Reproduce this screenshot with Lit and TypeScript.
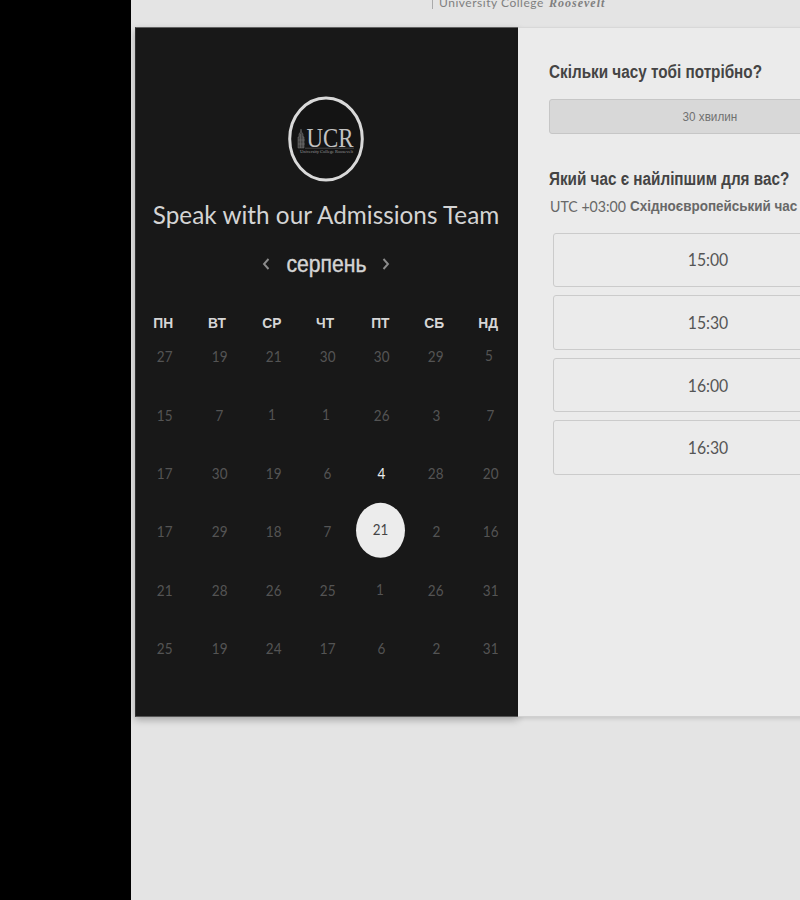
import { LitElement, html, css } from "lit";
import { customElement } from "lit/decorators.js";
import { classMap } from "lit/directives/class-map.js";

const WEEKDAYS = ["ПН", "ВТ", "СР", "ЧТ", "ПТ", "СБ", "НД"];
const WEEKS = [
  [27, 19, 21, 30, 30, 29, 5],
  [15, 7, 1, 1, 26, 3, 7],
  [17, 30, 19, 6, 4, 28, 20],
  [17, 29, 18, 7, 21, 2, 16],
  [21, 28, 26, 25, 1, 26, 31],
  [25, 19, 24, 17, 6, 2, 31],
];
const TIMES = ["15:00", "15:30", "16:00", "16:30"];

@customElement("booking-calendar")
class BookingCalendar extends LitElement {
  static styles = css`
    :host { display: flex; flex-direction: column; align-items: center; box-sizing: border-box; width: 383px; height: 690px; padding-top: 68px; background: #181818; color: #d4d4d4; border-top: 1px solid #626262; border-left: 1px solid #303030; border-bottom: 1px solid #555; box-shadow: 0 3px 7px rgba(0,0,0,.28); font-family: Lato, "Liberation Sans", sans-serif; }
    .logo { display: block; width: 76px; height: 86px; flex: none; margin-right: 2px; }
    .title { margin: 16px 0 0; height: 32px; line-height: 32px; font-size: 25px; font-weight: 400; white-space: nowrap; }
    .title span { display: inline-block; transform: translateX(-1px) scaleX(.973); }
    .month { display: flex; align-items: center; justify-content: center; gap: 14px; height: 30px; margin-top: 19px; margin-right: 2px; }
    .arrow { width: 8px; height: 12px; fill: none; stroke: #8c8c8c; stroke-width: 1.9; }
    .name { width: 84px; text-align: center; font: 23px/30px "Liberation Sans", sans-serif; -webkit-text-stroke: .4px #d4d4d4; }
    .name span { display: inline-block; transform: translateX(-1px) scaleX(.92); }
    .heads, .days { display: grid; grid-template-columns: repeat(7, 54.2px); width: 380px; align-self: flex-start; }
    .heads { margin-top: 34px; height: 20px; }
    .head { text-align: center; font: bold 15.5px/20px "Liberation Sans", sans-serif; color: #d6d6d6; }
    .head span { display: inline-block; transform: scaleX(.89); }
    .days { margin-left: 2px; margin-top: -6px; grid-auto-rows: 58.35px; }
    .day { display: flex; align-items: center; justify-content: center; font-size: 15px; color: #545454; }
    .day span { transform: scaleX(.9); }
    .raised span { transform: translate(-1.5px, -1px) scaleX(.9); }
    .open { color: #ececec; }
    .picked { color: #444; }
    .picked span { width: 55px; height: 55px; flex: none; box-sizing: border-box; padding-bottom: 2px; border-radius: 50%; background: #ececec; display: flex; align-items: center; justify-content: center; transform: translate(-1px, -1.2px) scaleX(.89); }
  `;
  render() {
    return html`
      <svg class="logo" viewBox="0 0 76 86">
        <ellipse cx="38" cy="43" rx="36.3" ry="41" fill="#141414" stroke="#d9d9d9" stroke-width="3" />
        <path d="M10 52V41h1v-3l1.500-2 .5-3 .5 3 1.500 2v3h1v11zM10 44h7M10 48h7M12.500 38v14M15 40v12" fill="#444" stroke="#777" stroke-width=".5" />
        <text x="18.500" y="50.500" font-family="Liberation Serif, serif" font-size="27.500" fill="#c2c2c2" textLength="47" lengthAdjust="spacingAndGlyphs">UCR</text>
        <path d="M17 52.200h49" stroke="#777" stroke-width=".5" />
        <text x="12" y="56.500" font-family="Liberation Serif, serif" font-size="5" fill="#999" textLength="53" lengthAdjust="spacingAndGlyphs">University College Roosevelt</text>
      </svg>
      <h1 class="title"><span>Speak with our Admissions Team</span></h1>
      <div class="month">
        <svg class="arrow" viewBox="0 0 8 12"><path d="M6.500 1L2 6l4.500 5" /></svg>
        <div class="name"><span>серпень</span></div>
        <svg class="arrow" viewBox="0 0 8 12"><path d="M1.500 1L6 6l-4.500 5" /></svg>
      </div>
      <div class="heads">${WEEKDAYS.map((d) => html`<div class="head"><span>${d}</span></div>`)}</div>
      <div class="days">
        ${WEEKS.map((w, r) => w.map((d, c) => html`<div class=${classMap({
          day: true,
          raised: d === 1 || d === 5,
          open: r === 2 && c === 4,
          picked: r === 3 && c === 4,
        })}><span>${d}</span></div>`))}
      </div>`;
  }
}

@customElement("booking-times")
class BookingTimes extends LitElement {
  static styles = css`
    :host { display: block; box-sizing: border-box; flex: none; width: 380px; height: 690px; padding: 33px 0 0 31px; background: #ebebeb; border-top: 1px solid #d8d8d8; border-bottom: 1px solid #d0d0d0; box-shadow: 0 2px 4px rgba(0,0,0,.12); font-family: "Liberation Sans", sans-serif; color: #444; white-space: nowrap; }
    h2 { margin: 0; height: 22px; font-size: 17.5px; line-height: 22px; font-weight: bold; }
    h2 span, .zone span { display: inline-block; transform-origin: 0 50%; }
    .q1 { transform: scaleX(.873); }
    .q2 { transform: scaleX(.872); }
    .duration { display: flex; align-items: center; justify-content: center; box-sizing: border-box; width: 322px; height: 35px; margin: 16px 0 34px; background: #d8d8d8; border: 1px solid #c6c6c6; border-radius: 3px; color: #707070; font-size: 13px; }
    .duration span { transform: translateX(-.5px) scaleX(.9); }
    .zone { display: flex; height: 20px; margin: 6px 0 0 1px; font-size: 15px; line-height: 20px; color: #686868; }
    .utc { width: 80px; font-family: Lato, sans-serif; font-size: 16px; line-height: 19px; }
    .utc span { transform: scaleX(.885); }
    .place { font-weight: bold; }
    .place span { transform: scaleX(.896); }
    .slots { display: flex; flex-direction: column; gap: 8px; width: 310px; margin: 16.6px 0 0 4px; }
    .slot { display: flex; align-items: center; justify-content: center; box-sizing: border-box; height: 54.6px; border: 1.5px solid #cbcbcb; border-radius: 3px; font: 17.5px Lato, sans-serif; color: #555; }
    .slot span { transform: translate(-.5px, -.5px) scaleX(.9); }
  `;
  render() {
    return html`
      <h2><span class="q1">Скільки часу тобі потрібно?</span></h2>
      <div class="duration"><span>30 хвилин</span></div>
      <h2><span class="q2">Який час є найліпшим для вас?</span></h2>
      <div class="zone"><div class="utc"><span>UTC +03:00</span></div><div class="place"><span>Східноєвропейський час</span></div></div>
      <div class="slots">${TIMES.map((t) => html`<div class="slot"><span>${t}</span></div>`)}</div>`;
  }
}

@customElement("app-root")
class AppRoot extends LitElement {
  static styles = css`
    :host { display: flex; width: 800px; height: 900px; overflow: hidden; background: #000; }
    .page { flex: none; box-sizing: border-box; width: 669px; height: 900px; margin-left: 131px; background: #e4e4e4; overflow: hidden; }
    .brand { display: flex; height: 27px; padding-left: 301px; color: #808080; white-space: nowrap; }
    .rule { width: 1px; height: 9px; background: #aaa; margin-right: 6px; }
    .college { font: 12px/14px Lato, sans-serif; letter-spacing: .52px; margin-top: -4px; width: 110px; }
    .roosevelt { font: italic bold 12px/14px "Liberation Serif", serif; letter-spacing: 1px; margin-top: -4px; }
    .card { display: flex; padding-left: 4px; }
    booking-calendar { flex: none; }
  `;
  render() {
    return html`<main class="page">
      <div class="brand"><i class="rule"></i><span class="college">University College</span><span class="roosevelt">Roosevelt</span></div>
      <div class="card"><booking-calendar></booking-calendar><booking-times></booking-times></div>
    </main>`;
  }
}
